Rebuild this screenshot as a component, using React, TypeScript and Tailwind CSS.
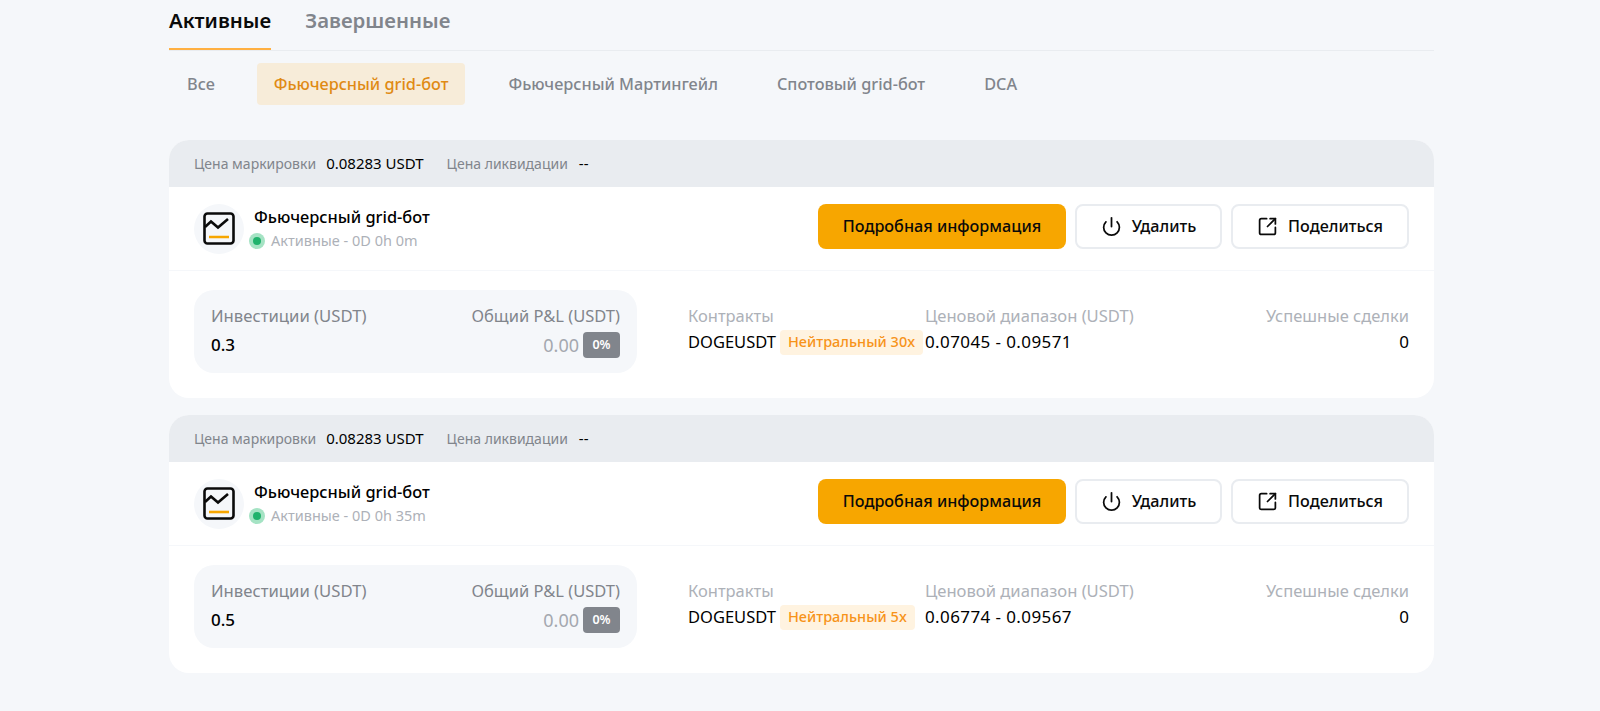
import React from "react";
import { Power, SquareArrowOutUpRight } from "lucide-react";

function BotIcon() {
  return (
    <div className="w-[50px] h-[50px] rounded-full bg-[#f5f7fa] flex items-center justify-center shrink-0">
      <svg width="32" height="33" viewBox="0 0 32 33" fill="none">
        <rect x="1.5" y="1.5" width="29" height="30" rx="3" stroke="#0a0a0a" strokeWidth="2.6" />
        <path d="M2 15l6-5.5 7 6 10-8.5" stroke="#0a0a0a" strokeWidth="2.6" fill="none" />
        <path d="M6 25h20" stroke="#f7a600" strokeWidth="2.6" />
      </svg>
    </div>
  );
}

function Card({ leverage, inv, range, time }: { leverage: string; inv: string; range: string; time: string }) {
  return (
    <div className="bg-white rounded-[20px] overflow-hidden">
      <div className="h-[47px] bg-[#e9ecf0] px-[25px] flex items-center text-[14px]">
        <span className="text-[#81858c]">Цена маркировки</span>
        <span className="ml-[10px] text-[15px] text-black">0.08283 USDT</span>
        <span className="ml-[23px] text-[#81858c]">Цена ликвидации</span>
        <span className="ml-[11px] text-[15px] text-black">--</span>
      </div>
      <div className="h-[84px] px-[25px] flex items-center border-b border-[#f5f7fa]">
        <BotIcon />
        <div className="ml-[5px]">
          <div className="text-[16.4px] leading-[24px] font-medium text-black ml-[5px]">Фьючерсный grid-бот</div>
          <div className="flex items-center text-[14.5px] leading-[23px] text-[#adb1b8]">
            <span className="w-[16px] h-[16px] rounded-full bg-[#a5e3c4] flex items-center justify-center mr-[6px]">
              <span className="w-[8px] h-[8px] rounded-full bg-[#20b26c]" />
            </span>
            <span>Активные - 0D 0h {time}</span>
          </div>
        </div>
        <div className="ml-auto -mt-[5px] flex gap-[9px] text-[16.2px] font-medium text-[#0a0a0a]">
          <button className="w-[248px] h-[45px] rounded-[8px] bg-[#f7a600]">Подробная информация</button>
          <button className="w-[147px] h-[45px] rounded-[8px] border-2 border-[#e9ecf0] flex items-center justify-center gap-[10px]">
            <Power size={21} strokeWidth={2} />
            Удалить
          </button>
          <button className="w-[178px] h-[45px] rounded-[8px] border-2 border-[#e9ecf0] flex items-center justify-center gap-[10px]">
            <SquareArrowOutUpRight size={21} strokeWidth={2} />
            Поделиться
          </button>
        </div>
      </div>
      <div className="h-[127px] px-[25px] pt-[19px] flex items-start">
        <div className="w-[443px] h-[83px] rounded-[20px] bg-[#f5f7fa] px-[17px] pt-[14px] flex justify-between">
          <div>
            <div className="text-[16.7px] leading-[24px] text-[#81858c]">Инвестиции (USDT)</div>
            <div className="mt-[4px] text-[17px] leading-[26px] font-medium text-black">{inv}</div>
          </div>
          <div className="flex flex-col items-end">
            <div className="text-[16.5px] leading-[24px] text-[#81858c]">Общий P&amp;L (USDT)</div>
            <div className="mt-[4px] flex items-center gap-[4px]">
              <span className="text-[18px] leading-[26px] text-[#a4a8af]">0.00</span>
              <span className="w-[37px] h-[26px] rounded-[4px] bg-[#81858c] text-white text-[12.5px] font-semibold flex items-center justify-center">0%</span>
            </div>
          </div>
        </div>
        <div className="ml-[51px] flex-1 flex pt-[14px]">
          <div className="w-[237px]">
            <div className="text-[16.5px] leading-[24px] text-[#adb1b8]">Контракты</div>
            <div className="flex items-center h-[28px]">
              <span className="text-[16.5px] text-black">DOGEUSDT</span>
              <span className="ml-[4px] h-[25px] px-[8px] rounded-[4px] bg-[#fff3e0] text-[#f7931a] text-[14.5px] flex items-center font-medium whitespace-nowrap">Нейтральный {leverage}</span>
            </div>
          </div>
          <div className="flex-1">
            <div className="text-[16.6px] leading-[24px] text-[#adb1b8]">Ценовой диапазон (USDT)</div>
            <div className="text-[17px] leading-[28px] tracking-[0.4px] text-black">{range}</div>
          </div>
          <div className="text-right">
            <div className="text-[16.5px] leading-[24px] text-[#adb1b8]">Успешные сделки</div>
            <div className="text-[17px] leading-[28px] text-black">0</div>
          </div>
        </div>
      </div>
    </div>
  );
}

export default function App() {
  return (
    <div className="h-[711px] bg-[#f5f7fa] overflow-hidden font-['Noto_Sans',sans-serif]">
      <div className="w-[1265px] ml-[169px]">
        <div className="h-[51px] border-b border-[#e9ecf0] flex items-start gap-[34px] text-[20.4px] font-semibold">
          <div className="h-[50px] border-b-2 border-[#ffb042] leading-[41px] text-[#0a0a0a]">Активные</div>
          <div className="leading-[41px] text-[#81858c]">Завершенные</div>
        </div>
        <div className="mt-[12px] h-[42px] flex items-center text-[16.3px] font-medium text-[#81858c]">
          <div className="ml-[18px]">Все</div>
          <div className="ml-[42px] h-[42px] px-[17px] rounded-[4px] bg-[#f7ecd9] text-[#e08a14] flex items-center">Фьючерсный grid-бот</div>
          <div className="ml-[43px]">Фьючерсный Мартингейл</div>
          <div className="ml-[59px]">Спотовый grid-бот</div>
          <div className="ml-[59px]">DCA</div>
        </div>
        <div className="mt-[35px] flex flex-col gap-[17px]">
          <Card leverage="30x" inv="0.3" range="0.07045 - 0.09571" time="0m" />
          <Card leverage="5x" inv="0.5" range="0.06774 - 0.09567" time="35m" />
        </div>
      </div>
    </div>
  );
}
